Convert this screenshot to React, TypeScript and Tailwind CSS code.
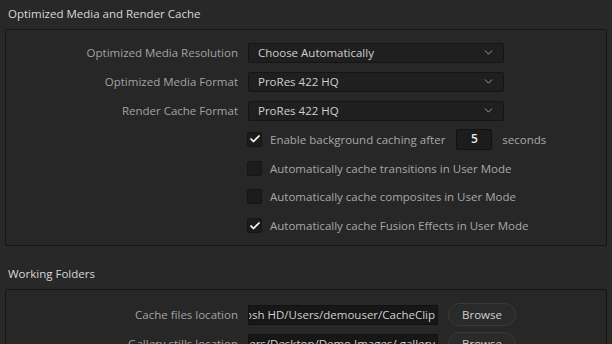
import { ChevronDown, Check } from "lucide-react";

const font = { fontFamily: '"Open Sans", "Liberation Sans", sans-serif' };

const Select = ({ value }: { value: string }) => (
  <div className="flex h-[20px] w-[256px] items-center justify-between rounded-[2px] border border-[#151515] bg-[#1f1f1f] pl-[9px] pr-[8px] text-[11.5px] text-[#cfcfcf]">
    <span>{value}</span>
    <ChevronDown className="h-[13px] w-[13px] text-[#b5b5b5]" strokeWidth={1.5} />
  </div>
);

const Checkbox = ({ checked }: { checked?: boolean }) => (
  <div className="flex h-[15px] w-[15px] items-center justify-center rounded-[2px] border border-[#151515] bg-[#1c1c1c]">
    {checked && <Check className="h-[12px] w-[12px] text-white" strokeWidth={3.5} />}
  </div>
);

const LabelRow = ({ label, children }: { label: string; children: React.ReactNode }) => (
  <div className="flex h-[29px] items-center">
    <div className="w-[232px] text-right text-[11.5px] text-[#a3a3a3]">{label}</div>
    <div className="ml-[10px] flex items-center">{children}</div>
  </div>
);

const CheckRow = ({ checked, children }: { checked?: boolean; children: React.ReactNode }) => (
  <div className="flex h-[28.8px] items-center pl-[241px]">
    <Checkbox checked={checked} />
    <div className="ml-[8px] flex items-center text-[11.5px] text-[#a8a8a8]">{children}</div>
  </div>
);

const PathInput = ({ value }: { value: string }) => (
  <div className="flex h-[20px] w-[190px] items-center justify-end overflow-hidden whitespace-nowrap border border-[#121212] bg-[#171717] pr-[2px] text-[11.5px] text-[#cfcfcf]">
    <span>{value}</span>
  </div>
);

const BrowseButton = () => (
  <button className="ml-[10px] h-[23px] w-[68px] rounded-full border border-[#3b3b3b] bg-[#2a2a2a] text-[11.5px] text-[#d0d0d0]">
    Browse
  </button>
);

export default function App() {
  return (
    <div className="h-[344px] w-[612px] overflow-hidden bg-[#282828]" style={font}>
      <div className="flex h-[29px] items-center pl-[8px] pb-[2px] text-[11.5px] font-medium text-[#d8d8d8]">
        Optimized Media and Render Cache
      </div>
      <div className="ml-[5px] w-[602px] rounded-[2px] border border-[#141414] bg-[#272727] pt-[8px] pb-[5px]">
        <LabelRow label="Optimized Media Resolution">
          <Select value="Choose Automatically" />
        </LabelRow>
        <LabelRow label="Optimized Media Format">
          <Select value="ProRes 422 HQ" />
        </LabelRow>
        <LabelRow label="Render Cache Format">
          <Select value="ProRes 422 HQ" />
        </LabelRow>
        <CheckRow checked>
          <span>Enable background caching after</span>
          <div className="ml-[11px] flex h-[21px] w-[36px] items-center justify-center rounded-[2px] border border-[#121212] bg-[#1c1c1c] text-[12px] font-semibold text-[#e8e8e8]">
            5
          </div>
          <span className="ml-[10px]">seconds</span>
        </CheckRow>
        <CheckRow>Automatically cache transitions in User Mode</CheckRow>
        <CheckRow>Automatically cache composites in User Mode</CheckRow>
        <CheckRow checked>Automatically cache Fusion Effects in User Mode</CheckRow>
      </div>
      <div className="flex h-[43px] items-center pl-[8px] pt-[12px] text-[11.5px] font-medium text-[#d8d8d8]">
        Working Folders
      </div>
      <div className="ml-[5px] w-[602px] rounded-[2px] border border-[#141414] bg-[#272727] pt-[10px]">
        <LabelRow label="Cache files location">
          <PathInput value="Macintosh HD/Users/demouser/CacheClip" />
          <BrowseButton />
        </LabelRow>
        <LabelRow label="Gallery stills location">
          <PathInput value="Macintosh HD/Users/Desktop/Demo Images/ gallery" />
          <BrowseButton />
        </LabelRow>
      </div>
    </div>
  );
}
